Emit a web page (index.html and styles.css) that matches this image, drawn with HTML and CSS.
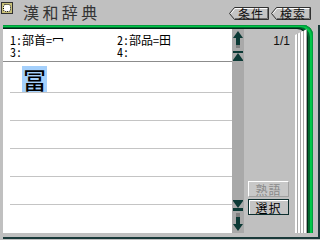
FILE: index.html
```html
<!DOCTYPE html>
<html lang="ja">
<head>
<meta charset="utf-8">
<title>漢和辞典</title>
<link rel="stylesheet" href="styles.css">
</head>
<body>
<div class="screen">
  <header class="top">
    <svg class="app-icon" width="12" height="12" viewBox="0 0 12 12">
      <rect x="0.5" y="0.5" width="11" height="11" fill="#c8c078" stroke="#303030"/>
      <rect x="2.5" y="2.5" width="7" height="7" rx="2" fill="#fff" stroke="#000" stroke-dasharray="1 1"/>
    </svg>
    <h1 class="title">漢和辞典</h1>
    <nav class="tabs">
      <button class="tab">
        <svg class="tab-shape" width="40" height="13" viewBox="0 0 40 13">
          <polygon points="5.5,0.5 39.5,0.5 39.5,12.5 5.5,12.5 0.5,6.5" fill="#c4c4c4"/>
          <polyline points="0.5,6.5 5.5,0.5 39.5,0.5 39.5,12.5 5.5,12.5 0.5,6.5" fill="none" stroke="#303030"/>
          <polyline points="2,6.5 6,1.5 38.5,1.5" fill="none" stroke="#ffffff"/>
          <polyline points="6,11.5 38.5,11.5 38.5,1.5" fill="none" stroke="#707070"/>
        </svg>
        <span class="tab-label">条件</span>
      </button>
      <button class="tab">
        <svg class="tab-shape" width="40" height="13" viewBox="0 0 40 13">
          <polygon points="5.5,0.5 39.5,0.5 39.5,12.5 5.5,12.5 0.5,6.5" fill="#c4c4c4"/>
          <polyline points="0.5,6.5 5.5,0.5 39.5,0.5 39.5,12.5 5.5,12.5 0.5,6.5" fill="none" stroke="#303030"/>
          <polyline points="2,6.5 6,1.5 38.5,1.5" fill="none" stroke="#ffffff"/>
          <polyline points="6,11.5 38.5,11.5 38.5,1.5" fill="none" stroke="#707070"/>
        </svg>
        <span class="tab-label">検索</span>
      </button>
    </nav>
  </header>

  <div class="book-wrap">
    <div class="book">
      <section class="list">
        <div class="cond">
          <div class="cond-line"><span class="cond-a">1:部首=冖</span><span>2:部品=田</span></div>
          <div class="cond-line"><span class="cond-a">3:</span><span>4:</span></div>
        </div>
        <ul class="rows">
          <li class="row first"><span class="hit">冨</span></li>
          <li class="row"></li>
          <li class="row"></li>
          <li class="row"></li>
          <li class="row"></li>
        </ul>
      </section>

      <div class="scroll">
        <div class="scroll-group">
          <svg width="12" height="17" viewBox="0 0 12 17">
            <polygon points="6,0 11,7 1,7" fill="#0c3a36"/>
            <rect x="4" y="7" width="4" height="7" fill="#0c3a36"/>
            <rect x="4" y="14" width="4" height="3" fill="#808080"/>
          </svg>
          <svg width="12" height="10" viewBox="0 0 12 10">
            <rect x="1" y="0" width="10" height="2" fill="#0c3a36"/>
            <polygon points="6,2 11,9 1,9" fill="#0c3a36"/>
            <rect x="1" y="9" width="10" height="1" fill="#0c3a36"/>
          </svg>
        </div>
        <div class="scroll-group low">
          <svg width="12" height="11" viewBox="0 0 12 11">
            <rect x="1" y="0" width="10" height="1" fill="#0c3a36"/>
            <polygon points="1,1 11,1 6,8" fill="#0c3a36"/>
            <rect x="1" y="8" width="10" height="3" fill="#0c3a36"/>
          </svg>
          <svg width="12" height="19" viewBox="0 0 12 19">
            <rect x="4" y="0" width="4" height="4" fill="#808080"/>
            <rect x="4" y="4" width="4" height="7" fill="#0c3a36"/>
            <polygon points="1,11 11,11 6,18" fill="#0c3a36"/>
          </svg>
        </div>
      </div>

      <aside class="side">
        <div class="page">1/1</div>
        <div class="btns">
          <button class="btn disabled">熟語</button>
          <button class="btn primary">選択</button>
        </div>
      </aside>

      <div class="stack"></div>
    </div>
  </div>
</div>
</body>
</html>
```

FILE: styles.css
```css
* {
  box-sizing: border-box;
}

html, body {
  margin: 0;
  padding: 0;
}

body {
  width: 320px;
  height: 240px;
  overflow: hidden;
  background: #c0c0c0;
  font-family: "Noto Sans Mono CJK JP", "Noto Sans CJK JP", sans-serif;
  font-size: 12px;
  color: #000;
}

.screen {
  width: 320px;
  height: 240px;
}

/* header */
.top {
  display: flex;
  align-items: flex-start;
  height: 25px;
}

.app-icon {
  display: block;
  margin: 2px 0 0 1px;
  flex: none;
}

.title {
  margin: 3px 0 0 10px;
  font-family: "Noto Sans CJK JP", sans-serif;
  font-size: 16px;
  font-weight: 400;
  line-height: 18px;
  letter-spacing: 3.4px;
  color: #343434;
}

.tabs {
  display: flex;
  gap: 2px;
  margin: 7px 9px 0 auto;
}

.tab {
  position: relative;
  width: 40px;
  height: 13px;
  padding: 0 0 0 9px;
  border: 0;
  background: none;
  font: inherit;
  text-align: left;
}

.tab-shape {
  position: absolute;
  left: 0;
  top: 0;
  display: block;
}

.tab-label {
  position: relative;
  display: block;
  font-size: 12px;
  line-height: 13px;
  color: #101010;
  letter-spacing: 1px;
}

/* book frame */
.book-wrap {
  width: 317px;
  margin-left: 3px;
  padding: 0 2px 4px 0;
  border-right: 2px solid #1a3a3a;
  border-bottom: 2px solid #1a3a3a;
}

.book {
  display: flex;
  width: 310px;
  height: 208px;
  padding: 4px 6px 0 0;
  border-top-right-radius: 10px;
  background: #c0c0c0;
  box-shadow:
    inset -1px 1px 0 #009a3c,
    inset -3px 2px 0 #00c848,
    inset -5px 3px 0 #00682e,
    inset -6px 4px 0 #002a18;
}

.list {
  width: 229px;
  height: 204px;
  background: #fff;
  flex: none;
}

.cond {
  height: 33px;
  padding: 5px 0 3px 7px;
  border-bottom: 1px solid #8c8c8c;
  white-space: nowrap;
}

.cond-line {
  display: flex;
  height: 12px;
  font-size: 12px;
  line-height: 12px;
}

.cond-a {
  width: 107px;
  flex: none;
}

.rows {
  list-style: none;
  margin: 0;
  padding: 0;
}

.row {
  height: 28px;
  margin-left: 7px;
  border-bottom: 1px solid #c4c4c4;
}

.row.first {
  height: 31px;
  padding: 4px 0 0 12px;
}

.hit {
  display: block;
  width: 25px;
  height: 26px;
  background: #a4d0fc;
  font-family: "Noto Sans CJK JP", sans-serif;
  font-size: 23px;
  font-weight: 500;
  line-height: 26px;
  text-align: center;
}

.scroll {
  display: flex;
  flex-direction: column;
  justify-content: space-between;
  width: 12px;
  height: 204px;
  padding: 2px 0 1px;
  background: #a9a9a9;
  flex: none;
}

.scroll-group {
  display: flex;
  flex-direction: column;
  gap: 3px;
}

.scroll-group.low {
  gap: 2px;
}

.scroll svg {
  display: block;
}

.side {
  display: flex;
  flex-direction: column;
  width: 51px;
  height: 204px;
  flex: none;
}

.page {
  padding: 5px 5px 0 0;
  text-align: right;
  font-family: "Liberation Sans", sans-serif;
  font-size: 12px;
  line-height: 14px;
  color: #101010;
}

.btns {
  display: flex;
  flex-direction: column;
  gap: 2px;
  margin-top: auto;
  padding: 0 0 18px 4px;
}

.btn {
  width: 41px;
  height: 16px;
  padding: 0;
  font: inherit;
  font-size: 12px;
  line-height: 13px;
  letter-spacing: 1px;
  text-align: center;
}

.btn.disabled {
  background: #c8c8c8;
  color: #8a8a8a;
  border: 1px solid;
  border-color: #ffffff #a0a0a0 #a0a0a0 #ffffff;
}

.btn.primary {
  background: #c4c4c4;
  color: #000;
  border: 1px solid #0c2e2e;
  box-shadow: inset 1px 1px 0 #ffffff;
}

.stack {
  width: 12px;
  height: 204px;
  flex: none;
  background: repeating-linear-gradient(to right, #ffffff 0 2px, #a8a8a8 2px 3px);
  clip-path: polygon(0 6px, 100% 0, 100% 100%, 0 100%);
}
```
